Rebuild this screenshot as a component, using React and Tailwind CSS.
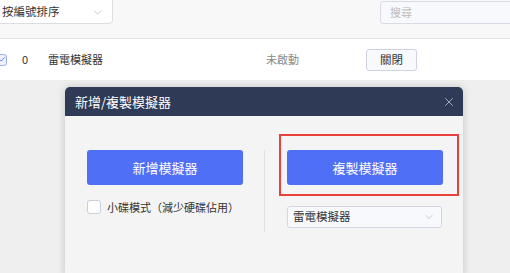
import { ChevronDown, X, Check } from "lucide-react";

export default function App() {
  return (
    <div className="h-[273px] w-[510px] overflow-hidden bg-[#efefef] font-['Noto_Sans_CJK_TC','Noto_Sans',sans-serif] text-[11px] text-[#333]">
      {/* Toolbar */}
      <div className="flex h-[39px] items-start justify-between border-b border-[#e3e3e3] bg-[#f8f8f8]">
        <div className="-ml-[6px] -mt-[6px] flex h-[30px] w-[119px] items-center justify-between rounded-[4px] border border-[#dcdde3] bg-white pl-[7px] pr-[8px]">
          <span className="pt-[6px] text-[11.5px] text-[#333]">按編號排序</span>
          <ChevronDown size={13} strokeWidth={1.2} className="mt-[6px] text-[#aaa]" />
        </div>
        <div className="-mr-[12px] mt-[1px] flex h-[23px] w-[142px] items-center rounded-[3px] border border-[#d9dbe6] bg-[#f8f9fc] pl-[9px]">
          <span className="text-[11px] text-[#bbb]">搜尋</span>
        </div>
      </div>

      {/* Row */}
      <div className="flex h-[41px] items-center bg-white">
        <div className="-ml-[6px] flex h-[12px] w-[13px] items-center justify-center rounded-[3px] border border-[#9fb1f0] bg-[#eef2ff]">
          <Check size={9} strokeWidth={2.5} className="ml-[3px] text-[#4d6ef5]" />
        </div>
        <span className="ml-[15px] text-[11px] text-[#333]">0</span>
        <span className="ml-[20px] text-[11px] text-[#333]">雷電模擬器</span>
        <span className="ml-[163px] text-[11px] text-[#888]">未啟動</span>
        <button className="ml-[67px] flex h-[22px] w-[51px] items-center justify-center rounded-[3px] border border-[#cfd2e3] bg-[#f8f9fd] text-[11.5px] text-[#333]">
          關閉
        </button>
      </div>

      {/* Modal area */}
      <div className="pl-[65px] pt-[7px]">
        <div className="w-[398px] overflow-hidden rounded-t-[5px] shadow-[0_0_8px_rgba(0,0,0,0.18)]">
          <div className="flex h-[29px] items-center justify-between bg-[#2f3a56] pl-[10px] pr-[7px]">
            <span className="text-[13px] text-white">新增/複製模擬器</span>
            <X size={14} strokeWidth={1.2} className="text-[#d5d8e2]" />
          </div>
          <div className="flex h-[160px] bg-[#f4f4f4] pt-[34px]">
            <div className="w-[199px] pl-[22px]">
              <button className="flex h-[35px] w-[156px] items-center justify-center rounded-[3px] bg-[#4f6ff7] text-[13px] text-white">
                新增模擬器
              </button>
              <label className="mt-[14px] flex items-center">
                <span className="h-[14px] w-[14px] rounded-[3px] border border-[#c9ccda] bg-white" />
                <span className="ml-[6px] text-[11px] text-[#333]">小碟模式（減少硬碟佔用）</span>
              </label>
            </div>
            <div className="h-[82px] w-px bg-[#e0e0e0]" />
            <div className="ml-[14px]">
              <div className="-mt-[16px] h-[62px] w-[180px] border-2 border-[#e8403c] px-[6px] pt-[14px]">
                <button className="flex h-[35px] w-[156px] items-center justify-center rounded-[3px] bg-[#4f6ff7] text-[13px] text-white">
                  複製模擬器
                </button>
              </div>
              <div className="ml-[8px] mt-[10px] flex h-[22px] w-[155px] items-center justify-between rounded-[3px] border border-[#d4d7e3] bg-[#f8f9fd] pl-[5px] pr-[6px]">
                <span className="text-[11.5px] text-[#333]">雷電模擬器</span>
                <ChevronDown size={12} strokeWidth={1.2} className="text-[#aaa]" />
              </div>
            </div>
          </div>
        </div>
      </div>
    </div>
  );
}
